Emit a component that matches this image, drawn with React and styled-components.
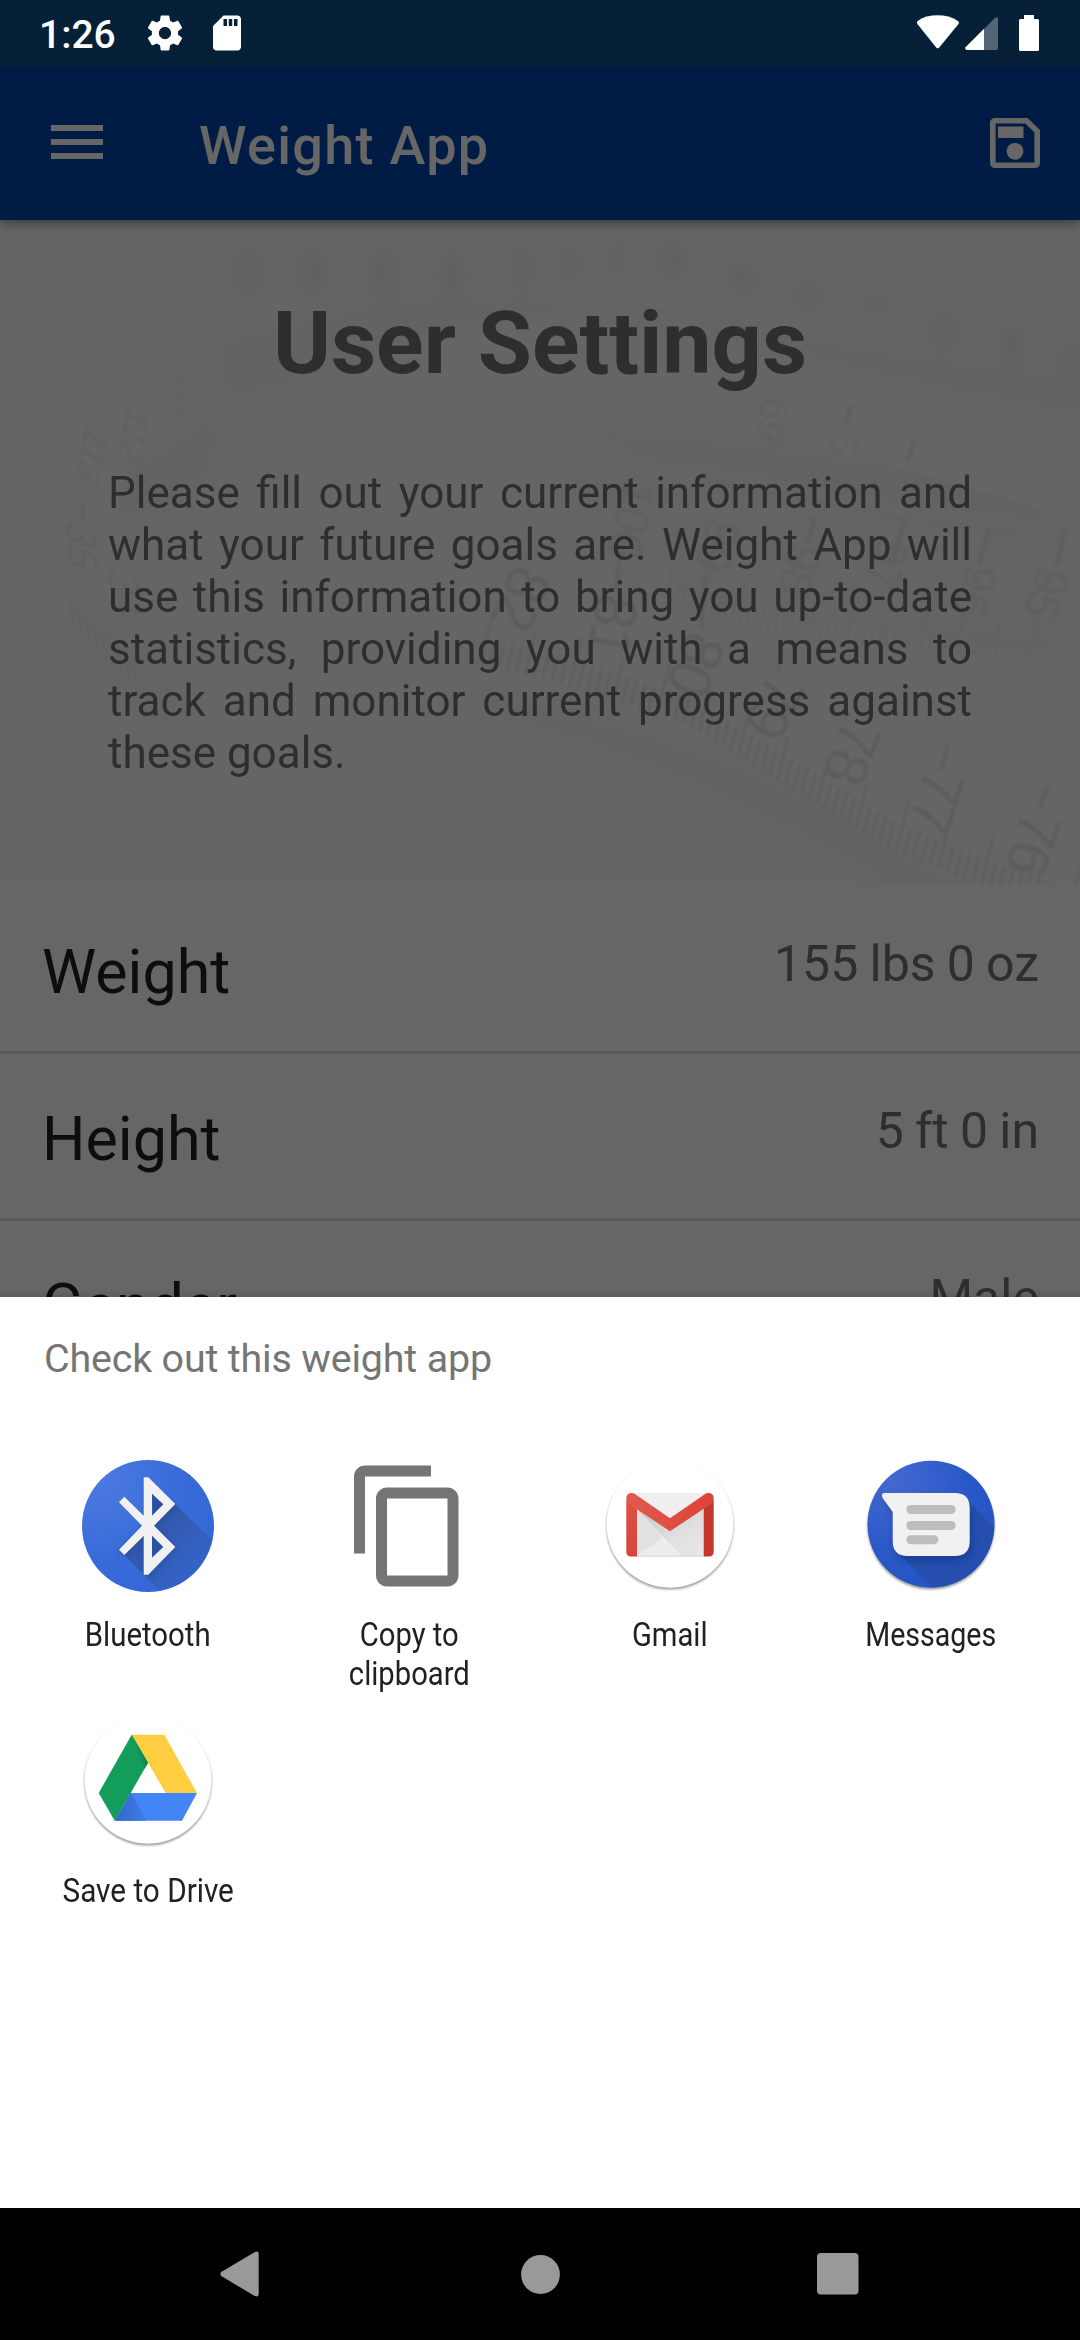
import React from "react";
import styled, { createGlobalStyle } from "styled-components";

const GlobalStyle = createGlobalStyle`
  * { box-sizing: border-box; }
  body { margin: 0; background: #000; font-family: Roboto, "Noto Sans", sans-serif; }
`;

const Phone = styled.div`
  width: 1080px;
  height: 2340px;
  display: flex;
  flex-direction: column;
  overflow: hidden;
  background: #fff;
`;

const StatusBar = styled.header`
  flex: none;
  height: 66px;
  display: flex;
  align-items: center;
  justify-content: space-between;
  padding: 0 37px 0 39px;
  background: #062038;
`;

const StatusGroup = styled.div`
  display: flex;
  align-items: center;
  gap: ${(p) => p.$gap}px;
`;

const Clock = styled.span`
  font-size: 39px;
  font-weight: 500;
  line-height: 46px;
  color: #fff;
  margin: 4px 8px 0 0;
`;

const Glyph = styled.svg`
  display: block;
  flex: none;
  overflow: visible;
`;

const Screen = styled.main`
  flex: none;
  height: 1231px;
  position: relative;
  overflow: hidden;
  background: #fff;
`;

const Scrim = styled.div`
  position: absolute;
  inset: 0;
  z-index: 2;
  background: linear-gradient(to top, rgba(0, 0, 0, 0.08), transparent 8px), rgba(0, 0, 0, 0.6);
`;

const AppBar = styled.div`
  height: 154px;
  display: flex;
  align-items: center;
  padding: 0 40px 0 51px;
  background: #0046aa;
  box-shadow: 0 3px 10px rgba(0, 0, 0, 0.42);
  position: relative;
  z-index: 1;
`;

const MenuButton = styled.div`
  width: 52px;
  height: 34px;
  display: flex;
  flex-direction: column;
  justify-content: space-between;
  margin: 0 96px 3px 0;
`;

const MenuLine = styled.span`
  height: 6px;
  background: #fff;
`;

const AppTitle = styled.h1`
  flex: 1;
  margin: 6px 0 0;
  font-size: 54px;
  font-weight: 500;
  letter-spacing: 1.3px;
  line-height: 64px;
  color: #fff;
`;

const Hero = styled.section`
  position: relative;
  height: 664px;
  padding: 71px 108px 0;
  background: #fdfdfd;
`;

const HeroArt = styled.svg`
  position: absolute;
  inset: 0;
  font-family: "Liberation Sans", sans-serif;
  font-weight: 400;
`;

const HeroTitle = styled.h2`
  position: relative;
  margin: 0 0 72px;
  font-size: 88px;
  font-weight: 700;
  line-height: 104px;
  text-align: center;
  color: #737373;
`;

const HeroText = styled.p`
  position: relative;
  margin: 0;
  font-size: 44px;
  line-height: 52px;
  text-align: justify;
  color: #737373;
`;

const List = styled.div`
  padding-top: 3px;
`;

const Row = styled.div`
  height: 167px;
  display: flex;
  justify-content: space-between;
  align-items: flex-start;
  padding: 0 41px 0 42px;
  border-bottom: 3px solid #e1e1e1;
`;

const RowLabel = styled.span`
  padding-top: 50px;
  font-size: 61px;
  line-height: 70px;
  color: #212121;
`;

const RowValue = styled.span`
  padding-top: 47px;
  font-size: 50px;
  line-height: 60px;
  word-spacing: -1.2px;
  color: #747474;
`;

const Sheet = styled.section`
  flex: 1;
  padding-top: 39px;
  background: #fff;
`;

const SheetTitle = styled.h3`
  margin: 0 0 78px 44px;
  font-size: 39.4px;
  font-weight: 400;
  line-height: 46px;
  letter-spacing: -0.16px;
  color: #757575;
`;

const TargetGrid = styled.div`
  display: grid;
  grid-template-columns: repeat(4, 261px);
  grid-auto-rows: 256px;
  padding-left: 17.5px;
`;

const Target = styled.div`
  display: flex;
  flex-direction: column;
  align-items: center;
  gap: 23px;
`;

const TargetLabel = styled.span`
  font-size: 33px;
  line-height: 39px;
  text-align: center;
  white-space: pre;
  color: #212121;
  transform: scaleX(${(p) => p.$condense});
`;

const NavBar = styled.nav`
  flex: none;
  height: 132px;
  display: flex;
  align-items: center;
  justify-content: space-between;
  padding: 0 221px 0 220px;
  background: #000;
`;

const GearIcon = () => (
  <Glyph width="42" height="42" viewBox="0 0 24 24" fill="#fff">
    <path d="M19.43 12.98c.04-.32.07-.64.07-.98s-.03-.66-.07-.98l2.11-1.65c.19-.15.24-.42.12-.64l-2-3.46c-.12-.22-.39-.3-.61-.22l-2.49 1c-.52-.4-1.08-.73-1.69-.98l-.38-2.65C14.46 2.18 14.25 2 14 2h-4c-.25 0-.46.18-.49.42l-.38 2.65c-.61.25-1.17.59-1.69.98l-2.49-1c-.23-.09-.49 0-.61.22l-2 3.46c-.13.22-.07.49.12.64l2.11 1.65c-.04.32-.07.65-.07.98s.03.66.07.98l-2.11 1.65c-.19.15-.24.42-.12.64l2 3.46c.12.22.39.3.61.22l2.49-1c.52.4 1.08.73 1.69.98l.38 2.65c.03.24.24.42.49.42h4c.25 0 .46-.18.49-.42l.38-2.65c.61-.25 1.17-.59 1.69-.98l2.49 1c.23.09.49 0 .61-.22l2-3.46c.12-.22.07-.49-.12-.64l-2.11-1.65zM12 15.5c-1.93 0-3.5-1.57-3.5-3.5s1.57-3.5 3.5-3.5 3.5 1.57 3.5 3.5-1.57 3.5-3.5 3.5z" />
  </Glyph>
);

const SdCardIcon = () => (
  <Glyph width="42" height="42" viewBox="0 0 24 24" fill="#fff">
    <path d="M18 2h-8L4.02 8 4 20c0 1.1.9 2 2 2h12c1.1 0 2-.9 2-2V4c0-1.1-.9-2-2-2zm-6 6h-2V4h2v4zm3 0h-2V4h2v4zm3 0h-2V4h2v4z" />
  </Glyph>
);

const StatusSignals = () => (
  <Glyph width="127" height="66" viewBox="916 0 127 66">
    <path d="M917 22.5q0-1 1-1.8Q926 15.300 937.500 15.300T957.500 20.700q1 .8 1.400 1.800q0 1-.6 1.800L939 47.700q-1.300 1.300-2.600 0L917.600 24.300q-.6-.8-.6-1.800z" fill="#fff" />
    <path d="M984 29l11.500-11.500q2.500-1 2.500 1V48q0 2-2 2H984z" fill="#536577" />
    <path d="M984 28.800V50H966.500q-2-.8-1-2.800z" fill="#fff" />
    <path d="M1024 15h10v4h3.500q1.500 0 1.500 1.500V49.500q0 1.500-1.500 1.500h-17q-1.500 0-1.500-1.500V20.500q0-1.500 1.500-1.500h3.500z" fill="#fff" />
  </Glyph>
);

const SaveIcon = () => (
  <Glyph width="50" height="50" viewBox="0 0 50 50">
    <path d="M5.500 2.800H36.500L47.200 13.200V44.500q0 2.700-2.700 2.700H5.500q-2.700 0-2.700-2.700V5.500q0-2.700 2.700-2.700z" fill="none" stroke="#fff" strokeWidth="5.6" />
    <rect x="8" y="8.500" width="25.500" height="11.500" fill="#fff" />
    <circle cx="25" cy="33.300" r="8.400" fill="#fff" />
  </Glyph>
);

/* Endpoints of the measuring tape's graduation edge, walked one tick at a time. */
const along = (points, step) => {
  const out = [];
  let carry = 0;
  for (let i = 0; i < points.length - 1; i += 1) {
    const [x1, y1] = points[i];
    const [x2, y2] = points[i + 1];
    const len = Math.hypot(x2 - x1, y2 - y1);
    let d = carry;
    for (; d < len; d += step) out.push([x1 + ((x2 - x1) * d) / len, y1 + ((y2 - y1) * d) / len]);
    carry = d - len;
  }
  return out;
};

const nearEdge = along([[480, 444], [560, 464], [684, 503], [787, 566], [893, 630], [985, 668], [1080, 700]], 9.2);
const farEdge = along([[668, 382], [760, 410], [860, 426], [1040, 440]], 7.4);

const nearNumbers = [
  ["82", 522, 378, 112], ["81", 613, 405, 101], ["80", 697, 444, 112], ["79", 775, 486, 115],
  ["78", 853, 532, 110], ["77", 937, 581, 107], ["76", 1034, 623, 107],
];
const farNumbers = [
  ["100", 632, 300, 104], ["99", 718, 325, 106], ["98", 800, 350, 104], ["97", 888, 345, 106],
  ["96", 976, 371, 106], ["95", 1047, 373, 108],
];
const dashes = [
  [948, 524, 942, 550], [1048, 566, 1040, 589], [783, 430, 778, 452], [706, 354, 701, 408],
  [619, 342, 616, 370], [815, 298, 808, 324], [904, 298, 894, 340], [989, 308, 979, 346],
  [1065, 308, 1057, 345], [850, 186, 846, 202], [914, 222, 908, 240],
];
const blurredMarks = [
  [248, 54, 30, 60], [313, 52, 30, 60], [383, 54, 32, 56], [452, 54, 32, 54], [522, 48, 26, 48],
  [570, 44, 24, 46], [618, 38, 20, 44], [674, 40, 32, 44], [742, 58, 32, 38], [808, 76, 32, 38],
  [878, 84, 30, 26], [944, 112, 32, 38], [1012, 124, 32, 40], [1072, 138, 26, 40],
];

const TapeMeasure = () => (
  <HeroArt width="1080" height="664" viewBox="0 0 1080 664">
    <defs>
      <filter id="soft" x="-10%" y="-10%" width="120%" height="120%"><feGaussianBlur stdDeviation="1.3" /></filter>
      <filter id="softer" x="-20%" y="-20%" width="140%" height="140%"><feGaussianBlur stdDeviation="8" /></filter>
    </defs>
    <g filter="url(#softer)">
      <path d="M215 120Q400 60 560 80T900 130T1090 150V200Q900 170 720 120T380 135T220 170z" fill="#f7f7f7" />
      <path d="M140 240Q170 240 215 185L214 240Q170 300 110 300z" fill="#f4f4f4" />
      <path d="M480 470Q700 500 860 600T1080 680H900Q700 560 480 500z" fill="#f8f8f8" />
      <path d="M590 190Q800 210 1080 320V440Q900 420 560 350z" fill="#f9f9f9" />
      <path d="M60 400Q150 480 190 660H260Q190 440 70 340z" fill="#fafafa" />
      {blurredMarks.map(([x, y, w, h]) => (
        <ellipse key={x} cx={x} cy={y} rx={w / 2} ry={h / 2} fill="#f2f2f2" />
      ))}
    </g>
    <g filter="url(#soft)">
      <path d="M620 226Q632 220 660 221Q850 235 1000 276Q1060 292 1040 298Q900 286 780 258Q700 240 640 238z" fill="#f5f5f5" />
      <path d="M590 226Q610 206 700 214Q900 236 1066 306Q1080 316 1040 316Q880 300 700 258" fill="none" stroke="#f6f6f6" strokeWidth="4" />
      <g fill="#e6e6e6" textAnchor="middle" letterSpacing="-3">
        {nearNumbers.map(([label, x, y, turn]) => (
          <text key={label} fontSize="60" dy="21" transform={`translate(${x} ${y}) rotate(${turn})`}>{label}</text>
        ))}
      </g>
      <g fill="#ededed" textAnchor="middle" letterSpacing="-1">
        {farNumbers.map(([label, x, y, turn]) => (
          <text key={label} fontSize="48" dy="17" transform={`translate(${x} ${y}) rotate(${turn})`}>{label}</text>
        ))}
        <text fontSize="42" dy="14" opacity=".7" transform="translate(772 200) rotate(100)">69</text>
        <text fontSize="40" dy="12" opacity=".7" transform="translate(842 224) rotate(108)">5</text>
        <text fontSize="36" dy="12" opacity=".8" transform="translate(134 216) rotate(100) skewX(-28)">112</text>
        <text fontSize="36" dy="12" opacity=".8" transform="translate(92 236) rotate(100) skewX(-28)">113</text>
        <text fontSize="42" dy="14" opacity=".9" transform="translate(81 326) rotate(86) skewX(-24)">35</text>
        <text fontSize="42" dy="14" opacity=".8" transform="translate(126 374) rotate(78) skewX(-24)">34</text>
      </g>
      <g stroke="#ebebeb" strokeWidth="3.4">
        {nearEdge.map(([x, y], i) => {
          const len = i % 10 === 0 ? 50 : i % 5 === 0 ? 42 : 26;
          return <line key={i} x1={x} y1={y} x2={x + len * 0.25} y2={y - len} />;
        })}
      </g>
      <g stroke="#f3f3f3" strokeWidth="2.600">
        {farEdge.map(([x, y], i) => (
          <line key={i} x1={x} y1={y} x2={x + 5} y2={y - (i % 5 === 0 ? 40 : 22)} />
        ))}
        {[70, 78, 86, 94, 102, 110, 118, 126, 134].map((x, i) => (
          <line key={x} x1={x} y1={378 + i * 7} x2={x + 3} y2={408 + i * 8} />
        ))}
      </g>
      <g stroke="#ebebeb" strokeWidth="5">
        {dashes.map(([x1, y1, x2, y2]) => <line key={`${x1}-${y1}`} x1={x1} y1={y1} x2={x2} y2={y2} />)}
        <line x1="170" y1="170" x2="188" y2="154" opacity=".5" />
        <line x1="168" y1="186" x2="186" y2="170" opacity=".5" />
        <line x1="166" y1="202" x2="184" y2="188" opacity=".5" />
        <line x1="83" y1="282" x2="83" y2="300" opacity=".6" />
      </g>
    </g>
  </HeroArt>
);

const BluetoothIcon = () => (
  <Glyph width="132" height="132" viewBox="0 0 132 132">
    <defs>
      <radialGradient id="btFace" cx=".15" cy=".15" r="1"><stop offset="0" stopColor="#4c7ae0" /><stop offset=".6" stopColor="#386bd8" /><stop offset="1" stopColor="#3367d6" /></radialGradient>
      <linearGradient id="btShade" x1=".2" y1=".2" x2=".8" y2=".8"><stop offset="0" stopColor="#2b4c92" stopOpacity=".75" /><stop offset=".7" stopColor="#34549a" stopOpacity=".22" /><stop offset="1" stopColor="#34549a" stopOpacity=".1" /></linearGradient>
      <clipPath id="btClip"><circle cx="66" cy="66" r="66" /></clipPath>
      <filter id="btBlur" x="-20%" y="-20%" width="140%" height="140%"><feGaussianBlur stdDeviation="2.5" /></filter>
    </defs>
    <circle cx="66" cy="66" r="66" fill="url(#btFace)" />
    <g clipPath="url(#btClip)">
      <path d="M93.300 44L160 110.700V160H107.300L42.300 95L72 65.700L70 33.700z" fill="url(#btShade)" />
      <path d="M64 20L94 46L74 67L94 90L68 118L60 112V80L42 97L36 91L60 68z" fill="#24458c" opacity=".35" filter="url(#btBlur)" />
    </g>
    <path fillRule="evenodd" fill="#f1f1f1" d="M61.700 17.300H66.300L93.300 44L72 65.700L93.300 87L66.300 114.700H61.700V76L42.300 95L37 89.700L60 65.700L37 42.300L42.300 36.700L61.700 55.700zM70 33.700V55.700L81.300 44.300zM70 75.700V97.700L81.300 87z" />
  </Glyph>
);

const CopyIcon = () => (
  <Glyph width="132" height="132" viewBox="0 0 24 24" fill="#757575">
    <path d="M16 1H4c-1.100 0-2 .9-2 2v14h2V3h12V1zm3 4H8c-1.100 0-2 .9-2 2v14c0 1.100.9 2 2 2h11c1.100 0 2-.9 2-2V7c0-1.100-.9-2-2-2zm0 16H8V7h11v14z" />
  </Glyph>
);

const Disc = ({ fill = "#fff", id }) => (
  <>
    <defs>
      <filter id={id} x="-10%" y="-10%" width="120%" height="125%"><feGaussianBlur stdDeviation="1.3" /></filter>
    </defs>
    <circle cx="66" cy="66" r="63.600" fill="#000" opacity=".38" filter={`url(#${id})`} />
    <circle cx="66" cy="64.200" r="63.500" fill={fill} />
  </>
);

const GmailIcon = () => (
  <Glyph width="132" height="132" viewBox="0 0 132 132">
    <defs>
      <linearGradient id="gmBand" x1="0" x2="1"><stop offset="0" stopColor="#e05a4e" /><stop offset="1" stopColor="#dc4437" /></linearGradient>
      <linearGradient id="gmLeft" x1="0" y1="0" x2="0" y2="1"><stop offset="0" stopColor="#dd5145" /><stop offset="1" stopColor="#d64538" /></linearGradient>
      <linearGradient id="gmRight" x1="0" y1="0" x2="0" y2="1"><stop offset="0" stopColor="#b8392c" /><stop offset=".4" stopColor="#c5392c" /><stop offset="1" stopColor="#c3382b" /></linearGradient>
      <linearGradient id="gmShade" x1="0" y1="0" x2="1" y2="1"><stop offset="0" stopColor="#c6c6c6" /><stop offset=".6" stopColor="#e0e0e0" /><stop offset="1" stopColor="#e8e8e8" /></linearGradient>
    </defs>
    <Disc id="gmDrop" />
    <path d="M28 33H104V96.300H28z" fill="#efefef" />
    <path d="M33 49V96L58.500 77.500z" fill="#e1e1e1" />
    <path d="M33 49L66 71.300L99.700 49V96.300H77.500z" fill="url(#gmShade)" />
    <path d="M33 96.300L58.500 77.500L77.500 96.300z" fill="#ededed" />
    <path d="M22.300 40H33V96.500H27q-4.700 0-4.700-4.700z" fill="url(#gmLeft)" />
    <path d="M99.700 40H109.700V91.800q0 4.700-4.700 4.700H99.700z" fill="url(#gmRight)" />
    <path d="M22.300 38.500Q22.300 33 27.700 33Q30 33 32.700 35.200L66 58.300L99.300 35.200Q102 33 104.300 33Q109.700 33 109.700 38.500Q109.700 42 107 44L66 71.300L25 44Q22.300 42 22.300 38.500z" fill="url(#gmBand)" />
    <path d="M33 96.200H99.700" stroke="#d5d5d5" strokeWidth="1" />
  </Glyph>
);

const MessagesIcon = () => (
  <Glyph width="132" height="132" viewBox="0 0 132 132">
    <defs>
      <radialGradient id="msFace" cx=".2" cy=".15" r=".8"><stop offset="0" stopColor="#4369cf" /><stop offset=".7" stopColor="#2b58c8" /><stop offset="1" stopColor="#2855c6" /></radialGradient>
      <clipPath id="msClip"><circle cx="66" cy="64.200" r="63.300" /></clipPath>
      <filter id="msBlur" x="-20%" y="-20%" width="140%" height="150%"><feGaussianBlur stdDeviation="3" /></filter>
    </defs>
    <Disc id="msDrop" fill="url(#msFace)" />
    <g clipPath="url(#msClip)">
      <path d="M101 39L150 88V150H88L32 91L70 70z" fill="#254da9" opacity=".85" />
      <path d="M18 38L28 54V84Q30 100 44 101H90Q107 100 107 84V50z" fill="#15337c" opacity=".5" filter="url(#msBlur)" />
    </g>
    <path d="M20 33H89.700Q104.700 33 104.700 48V81Q104.700 96 89.700 96H42.700Q27.700 96 27.700 81V52L17.600 38Q15.500 33 20 33z" fill="#f1f1f1" />
    <rect x="41.300" y="45" width="49.400" height="9" rx="4.500" fill="#bdbdbd" />
    <rect x="41.300" y="61" width="49.400" height="9" rx="4.500" fill="#bdbdbd" />
    <rect x="41.300" y="75.200" width="32" height="9" rx="4.500" fill="#bdbdbd" />
  </Glyph>
);

const DriveIcon = () => (
  <Glyph width="132" height="132" viewBox="0 0 132 132">
    <defs>
      <linearGradient id="drShade" x1="0" x2="1"><stop offset="0" stopColor="#3367c8" /><stop offset="1" stopColor="#3f7be8" /></linearGradient>
      <linearGradient id="drFold" x1=".9" y1=".3" x2=".3" y2=".6"><stop offset="0" stopColor="#0a7a45" /><stop offset="1" stopColor="#129e5a" /></linearGradient>
    </defs>
    <Disc id="drDrop" />
    <path d="M49.700 18.700H82.300L115 77H83.700z" fill="#ffcd40" />
    <path d="M48.700 77H115L100 104.700H32.700z" fill="#4285f4" />
    <path d="M48.700 77L64.500 104.700H32.700z" fill="url(#drShade)" />
    <path d="M49.700 18.700L66 46.700L48.700 77L32.700 104.700L16.700 77z" fill="#129e5a" />
    <path d="M49.700 18.700L66 46.700L62.500 52.800z" fill="url(#drFold)" />
  </Glyph>
);

const BackIcon = () => (
  <Glyph width="39" height="46" viewBox="0 0 39 46" fill="#999">
    <path d="M34.500 1.200Q38.700-.8 38.700 3V43Q38.700 46.500 34.700 45L1.200 25Q-.6 23 1.200 21z" />
  </Glyph>
);

const HomeIcon = () => (
  <Glyph width="44" height="40" viewBox="0 0 44 40" fill="#999"><circle cx="24.500" cy="20.500" r="19.400" /></Glyph>
);

const RecentsIcon = () => (
  <Glyph width="42" height="42" viewBox="0 0 42 42" fill="#999"><rect width="41.500" height="41.500" rx="4" /></Glyph>
);

const settings = [
  ["Weight", "155 lbs 0 oz"],
  ["Height", "5 ft 0 in"],
  ["Gender", "Male"],
];

const targets = [
  { label: "Bluetooth", Icon: BluetoothIcon, condense: 0.89 },
  { label: "Copy to\nclipboard", Icon: CopyIcon, condense: 0.885 },
  { label: "Gmail", Icon: GmailIcon, condense: 0.885 },
  { label: "Messages", Icon: MessagesIcon, condense: 0.865 },
  { label: "Save to Drive", Icon: DriveIcon, condense: 0.9 },
];

export default function App() {
  return (
    <Phone>
      <GlobalStyle />
      <StatusBar>
        <StatusGroup $gap={20}>
          <Clock>1:26</Clock>
          <GearIcon />
          <SdCardIcon />
        </StatusGroup>
        <StatusSignals />
      </StatusBar>
      <Screen>
        <AppBar>
          <MenuButton><MenuLine /><MenuLine /><MenuLine /></MenuButton>
          <AppTitle>Weight App</AppTitle>
          <SaveIcon />
        </AppBar>
        <Hero>
          <TapeMeasure />
          <HeroTitle>User Settings</HeroTitle>
          <HeroText>
            Please fill out your current information and what your future goals are. Weight App will use this
            information to bring you up-to-date statistics, providing you with a means to track and monitor
            current progress against these goals.
          </HeroText>
        </Hero>
        <List>
          {settings.map(([label, value]) => (
            <Row key={label}>
              <RowLabel>{label}</RowLabel>
              <RowValue>{value}</RowValue>
            </Row>
          ))}
        </List>
        <Scrim />
      </Screen>
      <Sheet>
        <SheetTitle>Check out this weight app</SheetTitle>
        <TargetGrid>
          {targets.map(({ label, Icon, condense }) => (
            <Target key={label}>
              <Icon />
              <TargetLabel $condense={condense}>{label}</TargetLabel>
            </Target>
          ))}
        </TargetGrid>
      </Sheet>
      <NavBar>
        <BackIcon />
        <HomeIcon />
        <RecentsIcon />
      </NavBar>
    </Phone>
  );
}
